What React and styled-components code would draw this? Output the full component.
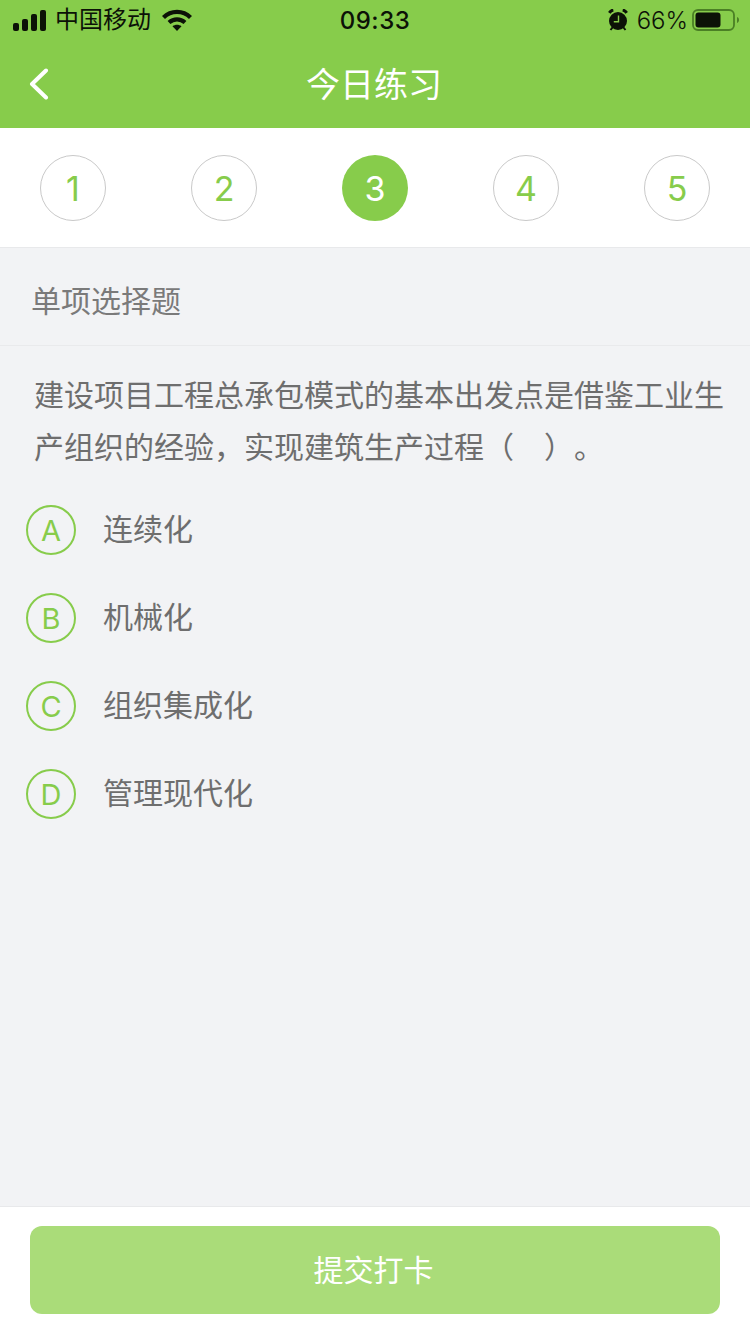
import React from "react";
import styled, { createGlobalStyle } from "styled-components";

const Global = createGlobalStyle`
  html, body { margin: 0; padding: 0; background: #f2f3f5; }
  * { box-sizing: border-box; }
`;

const FONT = `"Liberation Sans", "Noto Sans CJK SC", sans-serif`;
const LATIN = `Inter, "Liberation Sans", sans-serif`;
const GREEN = "#87cc4b";
const INK = "#0c1207";

const Page = styled.div`
  width: 750px;
  height: 1334px;
  display: flex;
  flex-direction: column;
  font-family: ${FONT};
  background: #f2f3f5;
  overflow: hidden;
`;

const TopBar = styled.header`
  height: 128px;
  background: ${GREEN};
  display: flex;
  flex-direction: column;
`;

const StatusBar = styled.div`
  height: 40px;
  padding: 0 13px;
  display: grid;
  grid-template-columns: 1fr auto 1fr;
  align-items: center;
  color: ${INK};
  font-size: 24px;
`;

const StatusLeft = styled.div`
  display: flex;
  align-items: center;
`;

const Carrier = styled.span`
  margin: 0 11px 0 9px;
  font-size: 24px;
  line-height: 40px;
`;

const Clock = styled.span`
  font-family: ${LATIN};
  font-size: 24px;
  font-weight: 500;
  letter-spacing: 0.5px;
`;

const StatusRight = styled.div`
  display: flex;
  align-items: center;
  justify-content: flex-end;
  margin-right: -2px;
`;

const Percent = styled.span`
  font-family: ${LATIN};
  font-weight: 300;
  font-size: 24px;
  margin: 0 4px 0 8px;
`;

const NavRow = styled.div`
  flex: 1;
  position: relative;
  display: flex;
  align-items: center;
  justify-content: center;
  padding: 2px 2px 0 0;
`;

const BackIcon = styled.svg`
  position: absolute;
  left: 28px;
  top: 28px;
`;

const NavTitle = styled.h1`
  margin: 0;
  color: #fff;
  font-size: 34px;
  font-weight: 400;
  line-height: 40px;
`;

const Steps = styled.nav`
  height: 120px;
  padding: 27px 40px 0;
  background: #fff;
  border-bottom: 1px solid #e8e9eb;
  display: flex;
  justify-content: space-between;
  align-items: flex-start;
`;

const Step = styled.div`
  width: 66px;
  height: 66px;
  border-radius: 50%;
  display: flex;
  align-items: center;
  justify-content: center;
  font-family: ${LATIN};
  font-weight: 400;
  font-size: 34px;
  background: ${(p) => (p.$active ? GREEN : "#fff")};
  color: ${(p) => (p.$active ? "#fff" : GREEN)};
  border: ${(p) => (p.$active ? "none" : "1px solid #c9c9c9")};
`;

const SectionTitle = styled.div`
  height: 98px;
  padding: 4px 31px 0;
  display: flex;
  align-items: center;
  border-bottom: 1px solid #e9eaec;
  color: #7a7a7a;
  font-size: 30px;
`;

const Main = styled.main`
  flex: 1;
  display: flex;
  flex-direction: column;
`;

const Question = styled.p`
  margin: 0;
  padding: 24px 20px 0 34px;
  font-size: 30px;
  line-height: 52px;
  color: #6e6e6e;
  text-spacing-trim: space-all;
`;

const Options = styled.ul`
  list-style: none;
  margin: 0;
  padding: 31px 0 0 26px;
  display: flex;
  flex-direction: column;
  gap: 38px;
`;

const Option = styled.li`
  display: flex;
  align-items: center;
  gap: 27px;
  height: 50px;
  color: #6e6e6e;
  font-size: 30px;
`;

const Letter = styled.span`
  width: 50px;
  height: 50px;
  border-radius: 50%;
  border: 2px solid ${GREEN};
  color: ${GREEN};
  font-family: ${LATIN};
  font-weight: 400;
  font-size: 29px;
  display: flex;
  align-items: center;
  justify-content: center;
`;

const OptionText = styled.span`
  padding-bottom: 6px;
`;

const Footer = styled.footer`
  height: 128px;
  background: #fff;
  border-top: 1px solid #e8e9eb;
  padding: 19px 30px 0;
`;

const Submit = styled.button`
  display: block;
  width: 690px;
  height: 88px;
  border: none;
  border-radius: 12px;
  background: #aadc79;
  color: #fff;
  font-family: ${FONT};
  font-size: 30px;
  padding: 0 3px 4px 0;
`;

const SignalIcon = () => (
  <svg width="33" height="21" viewBox="0 0 33 21">
    <g fill={INK}>
      <rect x="0" y="13" width="6" height="8" rx="2" />
      <rect x="9" y="9" width="6" height="12" rx="2" />
      <rect x="18" y="4" width="6" height="17" rx="2" />
      <rect x="27" y="0" width="6" height="21" rx="2" />
    </g>
  </svg>
);

const WifiIcon = () => (
  <svg width="30" height="22" viewBox="0 0 30 22">
    <g fill="none" stroke={INK} strokeWidth="4.2">
      <path d="M1.5 8.500C9 .9 21 .9 28.500 8.500" />
      <path d="M7 13.500c4.700-4.200 11.300-4.200 16 0" />
    </g>
    <path d="M10.500 17.300c2.700-2 6.300-2 9 0L15 22z" fill={INK} />
  </svg>
);

const AlarmIcon = () => (
  <svg width="22" height="22" viewBox="0 0 22 22">
    <circle cx="11" cy="12" r="9" fill={INK} />
    <path d="M2.300 3.800c1-1.500 2.500-2.500 4-2.800M19.700 3.800c-1-1.500-2.500-2.500-4-2.800" fill="none" stroke={INK} strokeWidth="3" />
    <path d="M3.500 21l2-2.500M18.500 21l-2-2.500" stroke={INK} strokeWidth="2" />
    <path d="M11.500 6.500v6.300H6.800" fill="none" stroke={GREEN} strokeWidth="1.400" />
  </svg>
);

const BatteryIcon = () => (
  <svg width="47" height="22" viewBox="0 0 47 22">
    <rect x="1" y="1" width="41" height="20" rx="5" fill="none" stroke="#4b7f25" strokeWidth="1.800" />
    <rect x="3.500" y="3.500" width="25" height="15" rx="3" fill={INK} />
    <path d="M45 8c1.300.4 2 1.600 2 3s-.7 2.600-2 3z" fill="#4b7f25" />
  </svg>
);

const options = [
  ["A", "连续化"],
  ["B", "机械化"],
  ["C", "组织集成化"],
  ["D", "管理现代化"],
];

export default function App() {
  return (
    <Page>
      <Global />
      <TopBar>
        <StatusBar>
          <StatusLeft>
            <SignalIcon />
            <Carrier>中国移动</Carrier>
            <WifiIcon />
          </StatusLeft>
          <Clock>09:33</Clock>
          <StatusRight>
            <AlarmIcon />
            <Percent>66%</Percent>
            <BatteryIcon />
          </StatusRight>
        </StatusBar>
        <NavRow>
          <BackIcon width="22" height="32" viewBox="0 0 22 32">
            <path d="M18 2.500 4 16l14 13.500" fill="none" stroke="#fff" strokeWidth="4" strokeLinecap="round" strokeLinejoin="round" />
          </BackIcon>
          <NavTitle>今日练习</NavTitle>
        </NavRow>
      </TopBar>
      <Steps>
        {[1, 2, 3, 4, 5].map((n) => (
          <Step key={n} $active={n === 3}>{n}</Step>
        ))}
      </Steps>
      <Main>
        <SectionTitle>单项选择题</SectionTitle>
        <Question>
          建设项目工程总承包模式的基本出发点是借鉴工业生产组织的经验，实现建筑生产过程（　）。
        </Question>
        <Options>
          {options.map(([k, t]) => (
            <Option key={k}>
              <Letter>{k}</Letter>
              <OptionText>{t}</OptionText>
            </Option>
          ))}
        </Options>
      </Main>
      <Footer>
        <Submit>提交打卡</Submit>
      </Footer>
    </Page>
  );
}
